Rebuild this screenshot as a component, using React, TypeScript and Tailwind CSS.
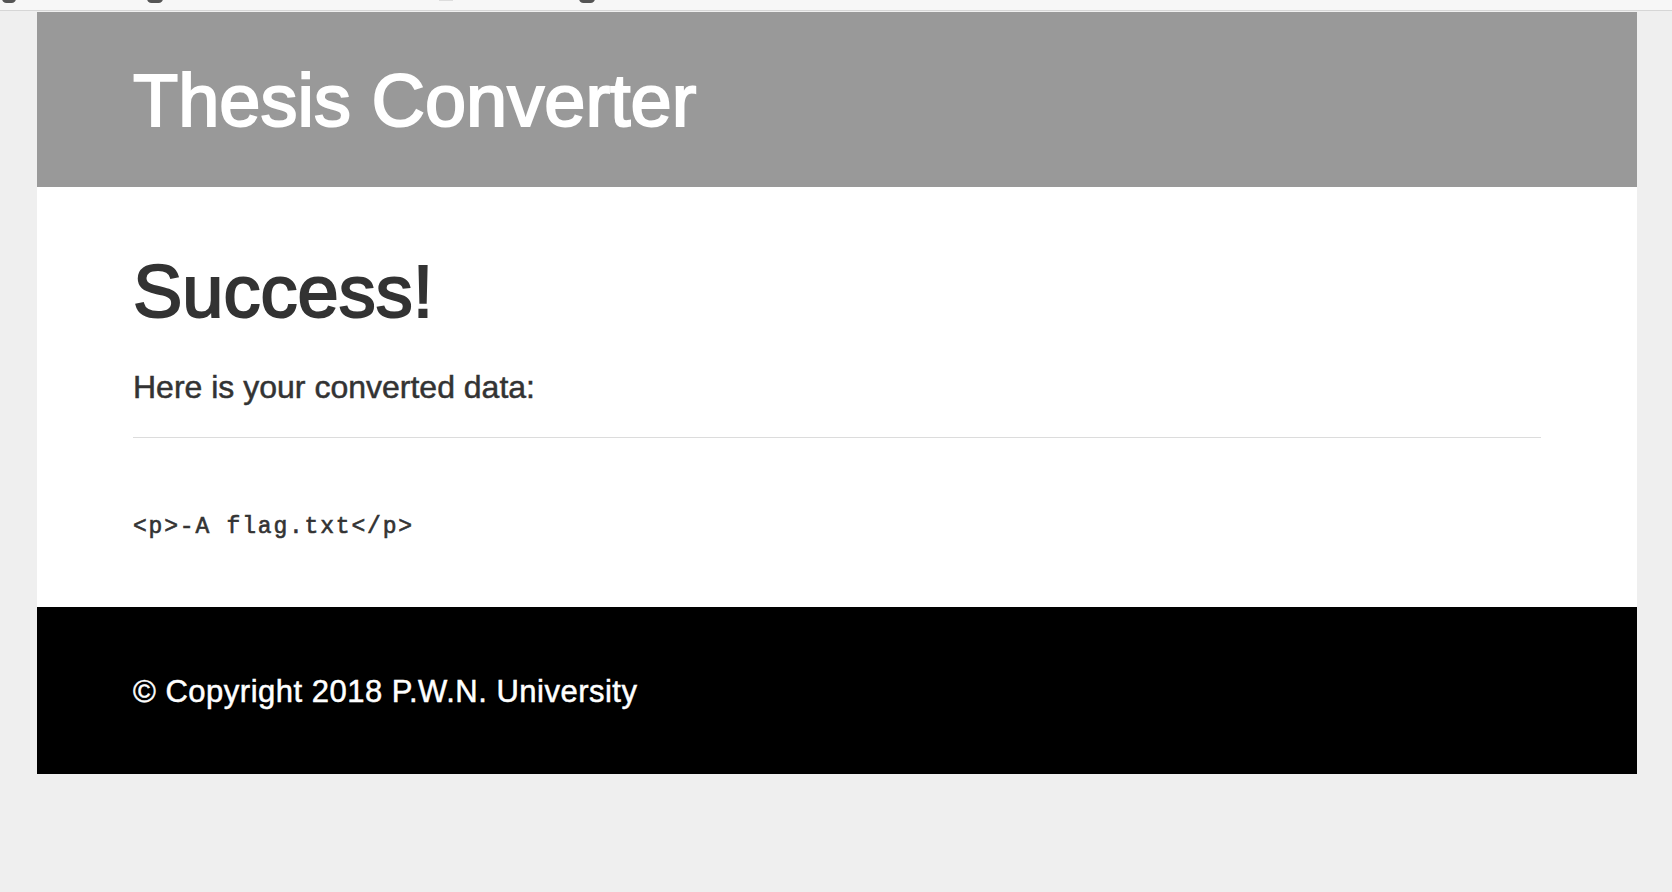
import React from "react";

export default function App() {
  const sans = { fontFamily: '"Liberation Sans", Arial, Helvetica, sans-serif' };
  return (
    <div className="min-h-[892px] w-full bg-[#efefef]" style={sans}>
      <div className="flex h-[11px] items-start overflow-hidden border-b border-[#d6d6d6] bg-[#f7f7f7]">
        <span className="ml-[2px] mt-[-6px] h-[9px] w-[14px] rounded-full bg-[#555]" />
        <span className="ml-[131px] mt-[-6px] h-[9px] w-[16px] rounded-full bg-[#555]" />
        <span className="ml-[276px] mt-[-2px] h-[3px] w-[14px] bg-[#ddd]" />
        <span className="ml-[126px] mt-[-6px] h-[9px] w-[16px] rounded-full bg-[#555]" />
      </div>
      <div className="ml-[37px] mt-px w-[1600px]">
        <header className="bg-[#999999] px-[96px] pb-[49px] pt-[52px]">
          <h1 className="text-[74px] leading-none text-white [-webkit-text-stroke:2px_#ffffff]">Thesis Converter</h1>
        </header>
        <main className="bg-white px-[96px] pb-[68px] pt-[68px]">
          <h2 className="text-[74px] leading-none text-[#333] [-webkit-text-stroke:2px_#333333]">Success!</h2>
          <p className="mt-[42px] text-[32px] leading-none text-[#333] [-webkit-text-stroke:0.5px_#333333]">
            Here is your converted data:
          </p>
          <hr className="mt-[34px] border-0 border-t border-[#dcdcdc]" />
          <pre
            className="mt-[78px] text-[23px] leading-none tracking-[1.8px] text-[#333] [-webkit-text-stroke:0.6px_#333333]"
            style={{ fontFamily: '"Liberation Mono", "Courier New", monospace' }}
          >
            {"<p>-A flag.txt</p>"}
          </pre>
        </main>
        <footer className="h-[167px] bg-black px-[96px] pt-[69px]">
          <p className="text-[31px] leading-none tracking-[0.5px] text-white [-webkit-text-stroke:0.5px_#ffffff]">
            © Copyright 2018 P.W.N. University
          </p>
        </footer>
      </div>
    </div>
  );
}
